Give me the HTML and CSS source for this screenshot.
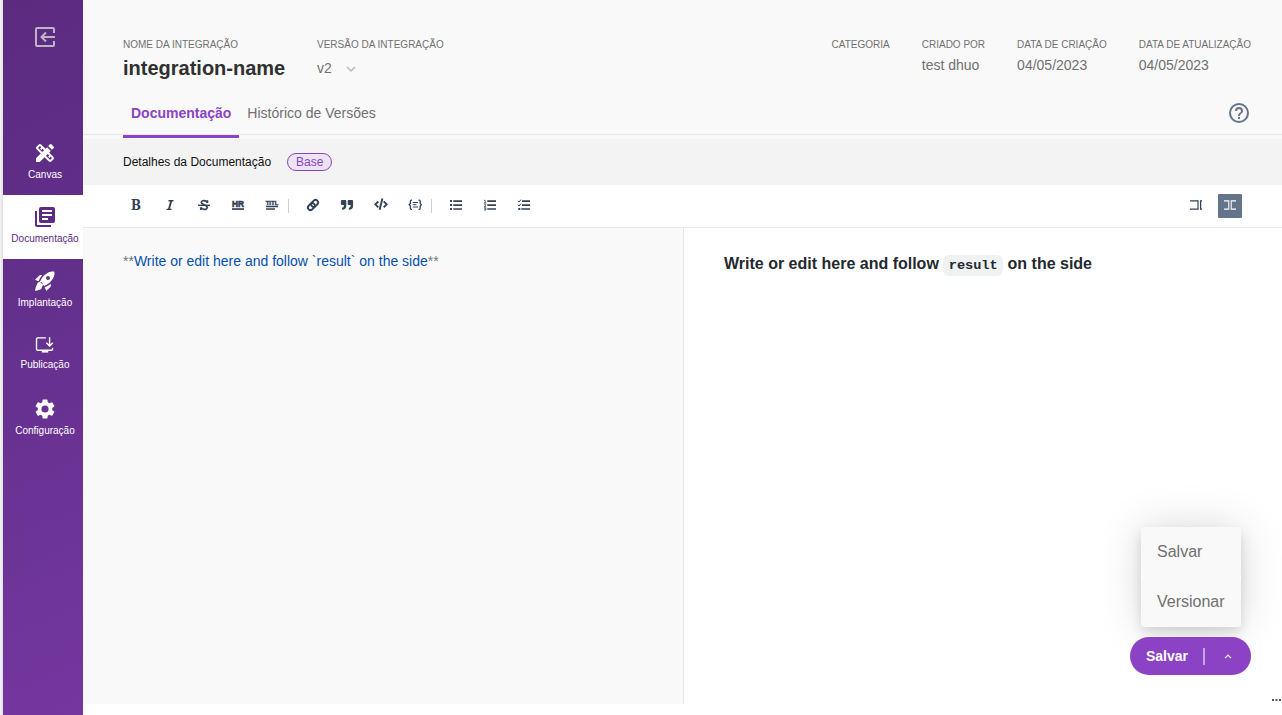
FILE: index.html
```html
<!DOCTYPE html>
<html lang="pt-BR">
<head>
<meta charset="utf-8">
<title>Documentação</title>
<link rel="stylesheet" href="styles.css">
</head>
<body>
<div class="app">
  <nav class="sidebar">
    <div class="exit">
      <svg width="22" height="22" viewBox="0 0 22 22" fill="none" stroke="currentColor" stroke-width="2"><path d="M20 7V3Q20 2 19 2H3Q2 2 2 3V19Q2 20 3 20H19Q20 20 20 19V15M21 11H7M12 6.500L7.500 11L12 15.500"/></svg>
    </div>
    <a class="nav-item"><svg class="nav-icon" viewBox="0 0 24 24" fill="currentColor"><path d="M16.240 11.510l1.570-1.570-3.750-3.750-1.570 1.570L8.350 3.630a2 2 0 0 0-2.830 0L3.630 5.520a2 2 0 0 0 0 2.830l4.130 4.130L3 17.250V21h3.750l4.760-4.760 4.130 4.130a2 2 0 0 0 2.830 0l1.890-1.890a2 2 0 0 0 0-2.830zM9.180 11.070L5.040 6.940l1.890-1.890 1.270 1.270L7.020 7.500l1.410 1.410 1.190-1.190 1.450 1.450zM17.060 18.960l-4.130-4.130 1.900-1.900 1.450 1.450-1.190 1.190 1.410 1.410 1.190-1.190 1.270 1.270zM20.710 7.040a1 1 0 0 0 0-1.410l-2.340-2.340a1 1 0 0 0-1.410 0l-1.830 1.830 3.750 3.750z"/></svg><span>Canvas</span></a>
    <a class="nav-item active"><svg class="nav-icon" viewBox="0 0 24 24" fill="currentColor"><path d="M4 6H2v14c0 1.100.9 2 2 2h14v-2H4zM20 2H8a2 2 0 0 0-2 2v12c0 1.100.9 2 2 2h12a2 2 0 0 0 2-2V4a2 2 0 0 0-2-2zm-1 9H9V9h10zm-4 4H9v-2h6zm4-8H9V5h10z"/></svg><span>Documentação</span></a>
    <a class="nav-item"><svg class="nav-icon" viewBox="0 0 24 24" fill="currentColor"><path d="M9.190 6.350c-2.040 2.290-3.440 5.580-3.570 5.890L2 10.690l4.050-4.050c.47-.47 1.150-.68 1.810-.55zM11.170 17s3.740-1.550 5.890-3.700c5.400-5.400 4.500-9.620 4.210-10.570-.95-.3-5.170-1.190-10.570 4.210C8.550 9.090 7 12.830 7 12.830zm6.480-2.190c-2.290 2.040-5.580 3.440-5.890 3.570L13.310 22l4.050-4.050c.47-.47.68-1.150.55-1.810zM9 18c0 .83-.34 1.580-.88 2.120C6.940 21.300 2 22 2 22s.7-4.940 1.880-6.120A3 3 0 1 1 9 18zm4-9a2 2 0 1 1 4 0 2 2 0 0 1-4 0z"/></svg><span>Implantação</span></a>
    <a class="nav-item publish"><svg class="nav-icon" viewBox="0 0 24 24" fill="none" stroke="currentColor" stroke-width="1.500"><path d="M13 4.250H4Q2.750 4.250 2.750 5.500V16.500Q2.750 17.750 4 17.750H19Q20.250 17.750 20.250 16.500V15M17 3.500V12.500M13.500 9.500L17 13L20.500 9.500"/><path d="M8.500 19H15.500" stroke-width="2.500"/></svg><span>Publicação</span></a>
    <a class="nav-item"><svg class="nav-icon" viewBox="0 0 24 24" fill="currentColor"><path d="M19.140 12.940c.04-.3.060-.61.060-.94s-.02-.64-.07-.94l2.030-1.580a.5.5 0 0 0 .12-.61l-1.920-3.320a.49.49 0 0 0-.59-.22l-2.390.96a7 7 0 0 0-1.620-.94L14.400 2.810a.48.48 0 0 0-.48-.41h-3.840a.47.47 0 0 0-.47.41l-.36 2.540a7.400 7.400 0 0 0-1.620.94l-2.390-.96a.48.48 0 0 0-.59.22L2.740 8.870a.48.48 0 0 0 .12.61l2.030 1.580a6 6 0 0 0 0 1.880l-2.030 1.580a.5.5 0 0 0-.12.610l1.920 3.320c.12.22.37.29.59.22l2.390-.96c.5.38 1.030.7 1.620.94l.36 2.540c.05.240.240.410.480.410h3.840c.24 0 .44-.17.470-.41l.36-2.540a7 7 0 0 0 1.620-.94l2.390.96c.22.080.470 0 .59-.22l1.920-3.320a.47.47 0 0 0-.12-.61zM12 15.600a3.600 3.600 0 1 1 0-7.200 3.600 3.600 0 0 1 0 7.200z"/></svg><span>Configuração</span></a>
  </nav>

  <main class="main">
    <header class="header">
      <div class="info">
        <div class="field name"><label>NOME DA INTEGRAÇÃO</label><h1>integration-name</h1></div>
        <div class="field version"><label>VERSÃO DA INTEGRAÇÃO</label><div class="select">v2 <svg width="10" height="6" viewBox="0 0 10 6" fill="none" stroke="#bdbdbd" stroke-width="1.600"><path d="M1 1L5 4.800L9 1"/></svg></div></div>
        <div class="meta">
          <div class="field"><label>CATEGORIA</label></div>
          <div class="field"><label>CRIADO POR</label><p>test dhuo</p></div>
          <div class="field"><label>DATA DE CRIAÇÃO</label><p>04/05/2023</p></div>
          <div class="field"><label>DATA DE ATUALIZAÇÃO</label><p>04/05/2023</p></div>
        </div>
      </div>
      <div class="tabs">
        <a class="tab selected">Documentação</a><a class="tab">Histórico de Versões</a>
        <svg class="help" width="24" height="24" viewBox="0 0 24 24" fill="#64748b"><path d="M11 18h2v-2h-2zm1-16a10 10 0 1 0 0 20 10 10 0 0 0 0-20zm0 18a8 8 0 1 1 0-16 8 8 0 0 1 0 16zm0-14a4 4 0 0 0-4 4h2a2 2 0 1 1 4 0c0 2-3 1.750-3 5h2c0-2.250 3-2.500 3-5a4 4 0 0 0-4-4z"/></svg>
      </div>
    </header>

    <div class="details"><span>Detalhes da Documentação</span><span class="badge">Base</span></div>

    <div class="toolbar">
      <div class="tools">
        <svg class="tool" viewBox="0 0 14 14"><text x="7" y="12" font-family="DejaVu Serif" font-weight="bold" font-size="14" text-anchor="middle" textLength="10" lengthAdjust="spacingAndGlyphs">B</text></svg>
        <svg class="tool" viewBox="0 0 14 14" fill="none" stroke="currentColor"><path d="M5.500 2.700H10.500M3.500 11.400H8.500" stroke-width="1.400"/><path d="M8.300 2.400L5.800 11.700" stroke-width="1.900"/></svg>
        <svg class="tool" viewBox="0 0 14 14" fill="none" stroke="currentColor" stroke-width="1.700"><path d="M10.400 5V2.300M10 4.500C9 2.200 4.300 1.900 4.300 4.600C4.300 6.700 10.200 6.900 10.200 9.300C10.200 12.300 5 12 4 9.500M3.800 9.200V12"/><path d="M1 7.300H13" stroke-width="1.400"/></svg>
        <svg class="tool" viewBox="0 0 14 14"><text x="7" y="8.600" font-family="Liberation Sans" font-weight="bold" font-size="8.600" text-anchor="middle" textLength="12" lengthAdjust="spacingAndGlyphs" stroke="currentColor" stroke-width=".6">HR</text><path d="M1 10.200H13V11.900H1z"/></svg>
        <svg class="tool" viewBox="0 0 14 14"><text x="7" y="6.600" font-family="Liberation Sans" font-weight="bold" font-size="6" text-anchor="middle" textLength="12.500" lengthAdjust="spacingAndGlyphs" stroke="currentColor" stroke-width=".45">TITL</text><path d="M1 7.800H13V9.200H1zM1 10.300H10V11.700H1z"/></svg>
        <i class="rule"></i>
        <svg class="tool" viewBox="0 0 14 14" fill="none" stroke="currentColor" stroke-width="1.900"><g transform="rotate(-45 7 7)"><rect x=".9" y="4.500" width="7.600" height="5" rx="2.500"/><rect x="5.500" y="4.500" width="7.600" height="5" rx="2.500"/></g></svg>
        <svg class="tool" viewBox="0 0 14 14" fill="currentColor"><path id="quote" d="M2 2H5.200Q6.300 2 6.300 3.200V7.500Q6.300 11.800 2 11.800V9.800Q3.900 9.800 3.900 7.500V7H2Q.9 7 .9 5.800V3.200Q.9 2 2 2z"/><use href="#quote" x="6.800"/></svg>
        <svg class="tool" viewBox="0 0 14 14" fill="none" stroke="currentColor" stroke-width="1.900"><path d="M4.300 3.300L1.300 6.300L4.300 9.300M9.700 3.300L12.700 6.300L9.700 9.300M8.400 .5L5.600 11.700"/></svg>
        <svg class="tool" viewBox="0 0 14 14" fill="none" stroke="currentColor" stroke-width="1.300"><path d="M4 2.200H3.300Q2.400 2.200 2.400 3.200V5.500L1.200 6.800L2.400 8V10.300Q2.400 11.300 3.300 11.300H4M10.600 2.200H11.300Q12.200 2.200 12.200 3.200V5.500L13.400 6.800L12.200 8V10.300Q12.200 11.300 11.300 11.300H10.600"/><path d="M4.800 4.500H10M4.800 6.700H8.500M4.800 9H10" stroke-width="1"/></svg>
        <i class="rule"></i>
        <svg class="tool" viewBox="0 0 14 14"><path d="M4.300 2.200H13V3.900H4.300zM4.300 6.200H13V7.900H4.300zM4.300 10.200H13V11.800H4.300zM1 2.100h2v1.900H1zM1 6.100h2v1.900H1zM1 10.100h2v1.800H1z"/></svg>
        <svg class="tool" viewBox="0 0 14 14"><path d="M4.300 2.200H13V3.900H4.300zM4.300 6.200H13V7.900H4.300zM4.300 10.200H13V11.800H4.300z"/><path d="M1 2.300H2.200V5M1 5H3.300M1 6.300H2.700V7.300L1.200 8.600H3.200M1 9.800H2.900V12H1M1.500 10.900H2.900" fill="none" stroke="currentColor" stroke-width=".8"/></svg>
        <svg class="tool" viewBox="0 0 14 14"><path d="M5 2.200H13V3.900H5zM5 6.200H13V7.900H5zM4.300 10.200H13V11.800H4.300zM1.300 10.100h2v1.800h-2z"/><path d="M.8 2.900L2 4L4 1.600M.8 6.900L2 8L4 5.600" fill="none" stroke="currentColor" stroke-width="1"/></svg>
      </div>
      <div class="views">
        <button class="view"><svg width="12" height="12" viewBox="0 0 12 12" fill="none" stroke="currentColor" stroke-width="1.300"><path d="M0 1.800H8M0 10.200H8M12 1.800H10.600V10.200H12"/><path d="M8 1.200V10.800" stroke-width="1.800" opacity=".65"/></svg></button>
        <button class="view on"><svg width="12" height="12" viewBox="0 0 12 12" fill="none" stroke="currentColor" stroke-width="1.300"><path d="M0 1.800H4.500M0 10.200H4.500M12 1.800H7.500M12 10.200H7.500"/><path d="M4.700 1.200V10.800M7.300 1.200V10.800" stroke-width="1.400" opacity=".75"/></svg></button>
      </div>
    </div>

    <div class="editor">
      <div class="source"><span class="mark">**</span>Write or edit here and follow `result` on the side<span class="mark">**</span></div>
      <div class="preview"><strong>Write or edit here and follow <code>result</code> on the side</strong></div>
    </div>
  </main>
</div>

<div class="actions">
  <div class="menu"><a>Salvar</a><a>Versionar</a></div>
  <button class="save"><span>Salvar</span><i></i><svg width="8" height="5" viewBox="0 0 8 5" fill="none" stroke="#fff" stroke-width="1.200"><path d="M1 4.200L4 1.200L7 4.200"/></svg></button>
</div>
<svg class="more" width="10" height="2" viewBox="0 0 10 2" fill="#555"><path d="M1 0H3V2H1zM4.500 0H6.500V2H4.500zM8 0H10V2H8z"/></svg>
</body>
</html>
```
FILE: styles.css
```css
* { box-sizing: border-box; }
body { margin: 0; background: #fff; font-family: "Liberation Sans", Arial, sans-serif; color: #707070; }
h1, p { margin: 0; }
button { border: 0; padding: 0; font-family: inherit; }
.app { display: flex; height: 715px; padding-left: 3px; overflow: hidden; background: linear-gradient(90deg, #f5f5f5 0, #dedede 3px, #fff 3px); }

.sidebar { width: 80px; flex: none; background: linear-gradient(155deg, #5b2b80 0%, #602e88 30%, #7437a0 100%); color: #fff; }
.exit { height: 131px; padding: 26px 0 0 31px; color: #bdb4c4; }
.exit svg { display: block; }
.nav-item { display: flex; flex-direction: column; align-items: center; height: 64px; padding: 10px 0 0 4px; font-size: 10px; line-height: 12px; white-space: nowrap; }
.nav-icon { display: block; flex: none; width: 24px; height: 24px; margin-bottom: 4px; }
.nav-item.active { background: #fff; color: #5c2b82; }
.publish .nav-icon { width: 22px; height: 22px; margin: 1px 0 3px; }

.main { flex: 1; display: flex; flex-direction: column; min-width: 0; }
.header { position: relative; z-index: 1; height: 135px; flex: none; background: #f9f9f9; border-bottom: 1px solid #e8e8e8; }
.info { display: flex; height: 92px; padding: 39px 31px 0 40px; }
.field label { display: block; font-size: 10px; line-height: 12px; white-space: nowrap; }
.field p { font-size: 14px; line-height: 16px; margin-top: 6px; }
.name { width: 194px; }
.name h1 { font-size: 20px; line-height: 24px; color: #303030; margin-top: 5px; }
.select { display: flex; align-items: center; gap: 14px; font-size: 14px; line-height: 16px; margin-top: 9px; }
.select svg { margin-top: 2px; }
.meta { display: flex; gap: 32px; margin-left: auto; }
.tabs { display: flex; height: 46px; padding: 0 31px 0 40px; }
.tab { height: 46px; padding: 13px 8px 0; font-size: 14px; line-height: 16px; }
.tab.selected { color: #8b42c4; font-weight: bold; border-bottom: 3px solid #8b42c4; }
.help { margin: 9px 0 0 auto; }

.details { display: flex; align-items: center; gap: 16px; height: 50px; flex: none; padding: 0 40px; border-top: 4px solid #f9f9f9; background: #f3f3f3; color: #111; font-size: 12px; }
.badge { height: 18px; padding: 0 8px; border: 1px solid #8b42c4; border-radius: 9px; background: #ece3f3; color: #8b42c4; line-height: 16px; }
.toolbar { display: flex; justify-content: space-between; height: 43px; flex: none; padding: 9px 40px 0; border-bottom: 1px solid #e8e8e8; color: #344256; }
.tools { display: flex; padding: 4px 0 0 6px; }
.tool { display: block; width: 14px; height: 14px; margin-right: 20px; color: #344256; }
.tool:not([fill]) { fill: currentColor; }
.rule { width: 1px; height: 14px; margin: 1px 17px 0 -11px; background: #ccd0d5; }
.views { display: flex; gap: 10px; }
.view { display: flex; justify-content: center; width: 24px; height: 24px; padding-top: 5px; border-radius: 1px; background: none; color: #344256; }
.view.on { background: #64748b; color: #fff; }

.editor { display: flex; height: 476px; flex: none; }
.source { width: 600px; flex: none; padding: 25px 40px; background: #f9f9f9; font-size: 14px; line-height: 16px; color: #0550ae; }
.mark { color: #6e7781; }
.preview { flex: 1; border-left: 1px solid #e8e8e8; padding: 24px 40px; font-size: 16px; line-height: 24px; color: #24292f; }
.preview code { padding: 3px 5.440px; border-radius: 6px; background: #eff1f3; font: bold 13.600px "Liberation Mono", monospace; }

.actions { position: absolute; right: 31px; bottom: 40px; display: flex; flex-direction: column; align-items: flex-end; gap: 10px; }
.menu { width: 100px; margin-right: 10px; border-radius: 4px; box-shadow: 0 6px 12px rgba(0,0,0,.12), 0 0 44px rgba(0,0,0,.15); font-size: 16px; }
.menu a { display: block; height: 50px; padding-left: 16px; line-height: 50px; border-radius: 4px; background: #f9f9f9; }
.save { position: relative; display: flex; align-items: center; width: 121px; height: 38px; padding-left: 16px; border-radius: 19px; background: #8b42c4; color: #fff; font-size: 14px; font-weight: bold; }
.save i { width: 2px; height: 17px; margin: 0 19px 0 15px; background: #c9a3e2; }
.more { position: absolute; right: 1px; bottom: 14px; }
```
